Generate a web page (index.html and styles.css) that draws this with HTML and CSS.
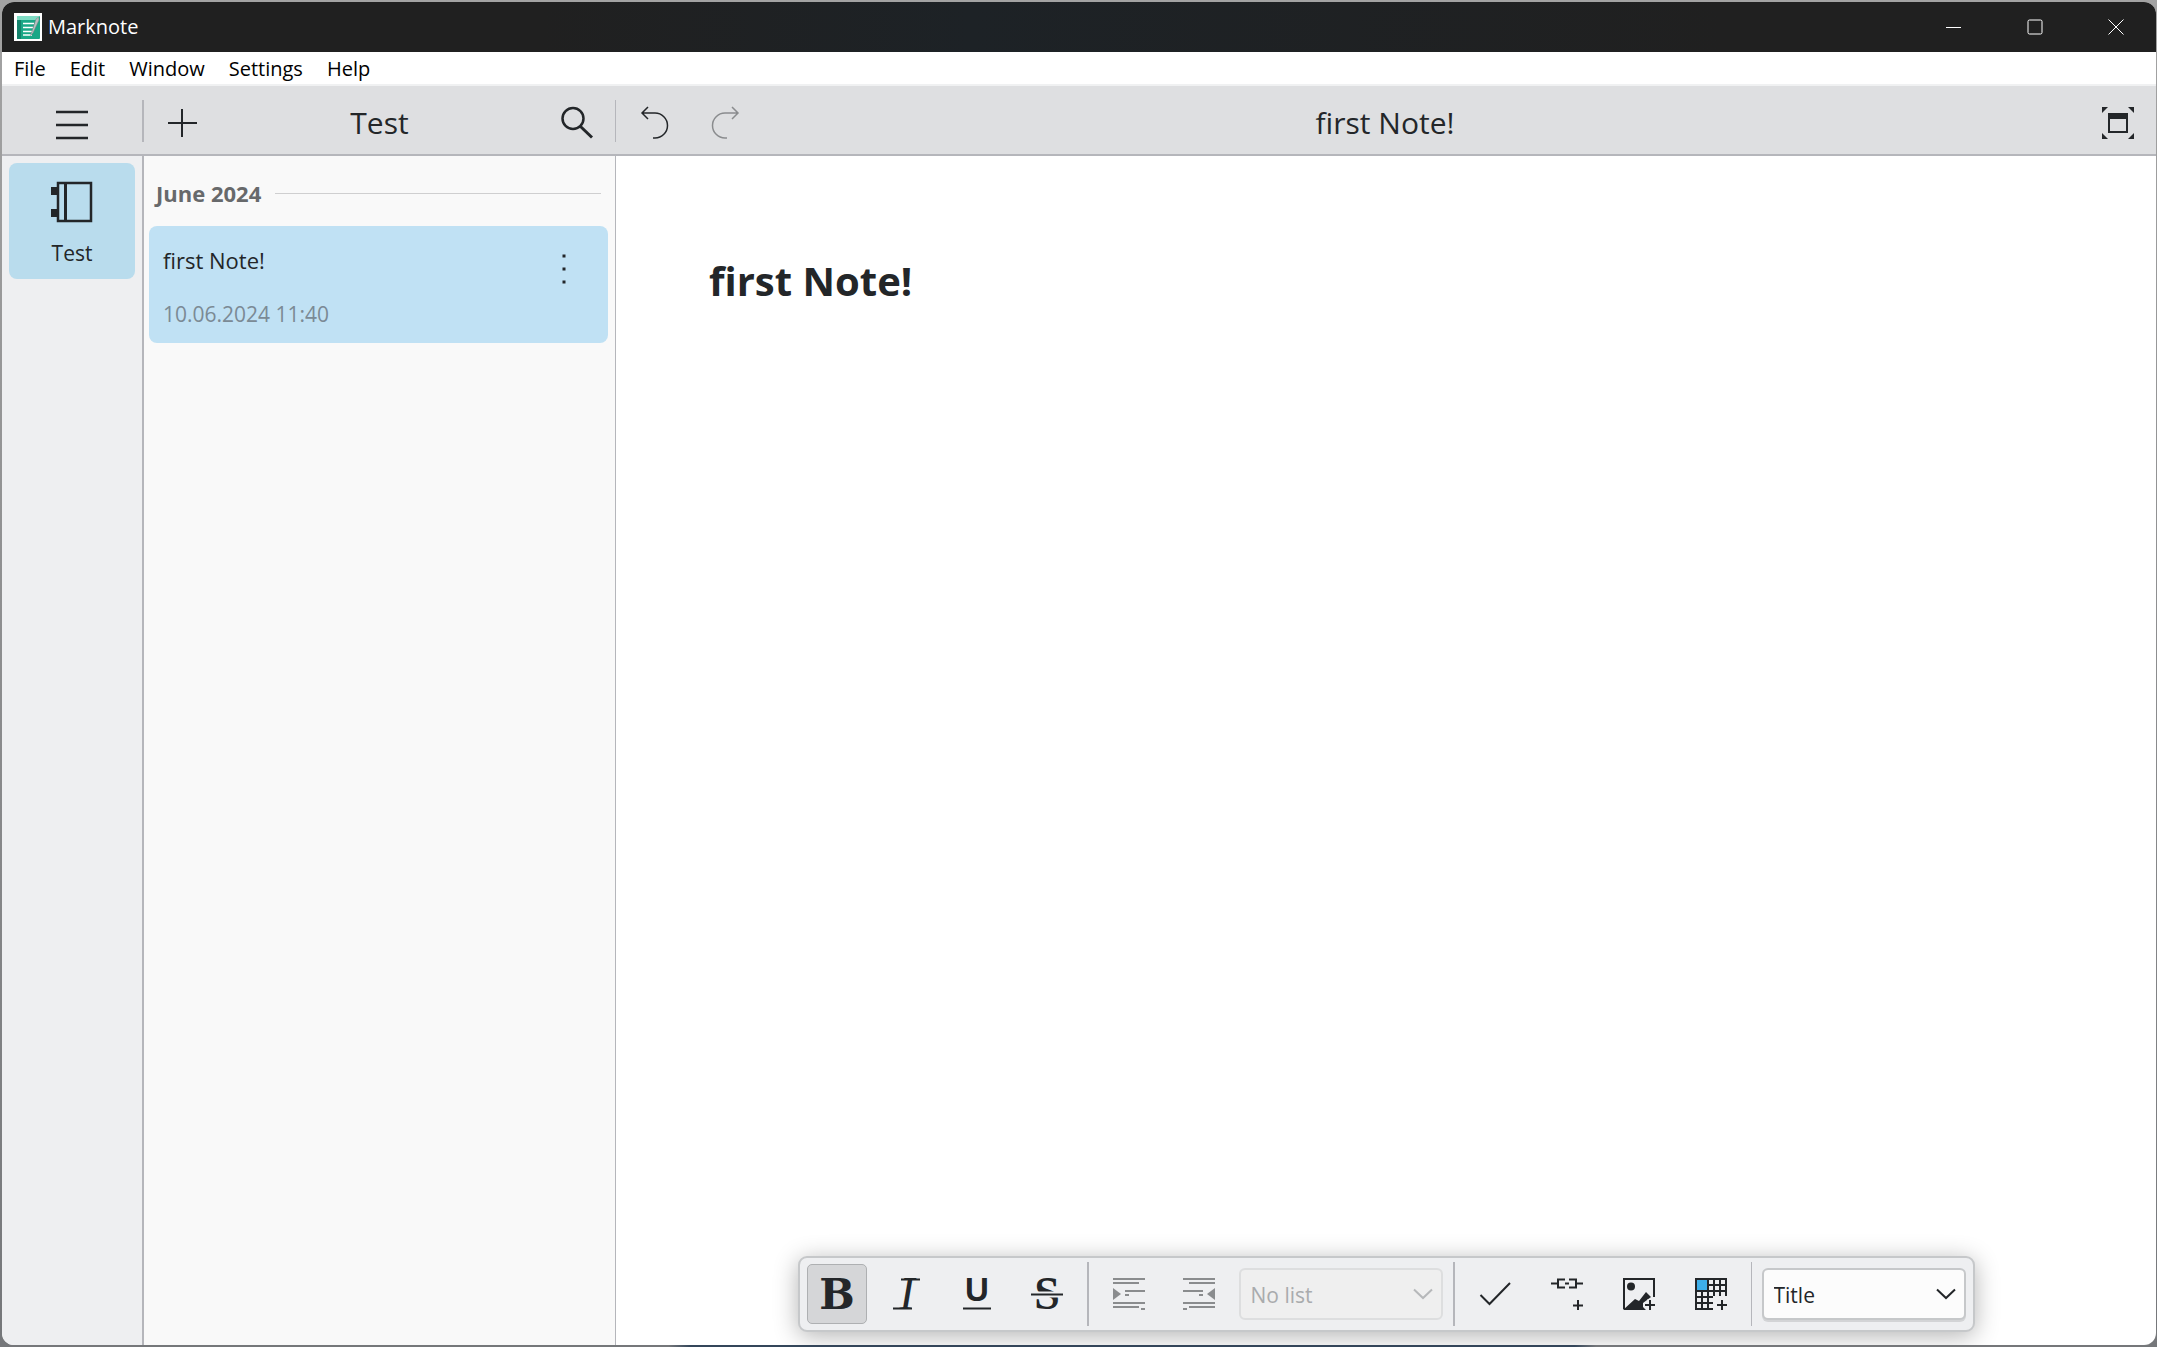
FILE: index.html
```html
<!DOCTYPE html>
<html lang="en">
<head>
<meta charset="utf-8">
<title>Marknote</title>
<link rel="stylesheet" href="styles.css">
</head>
<body>
<div class="window">
  <header class="titlebar">
    <svg class="app-icon" viewBox="0 0 28 28" aria-hidden="true">
      <rect width="28" height="28" fill="#fff"/>
      <rect x="3" y="3" width="23" height="23" rx="1" fill="#1aa786"/>
      <rect x="3" y="3" width="4" height="23" fill="#14826b"/>
      <path d="M3 3H25V7H3Z" fill="#7fdcc4"/>
      <path d="M9 10.500H20M9 14.500H19M9 18.500H18M9 22H18" stroke="#fff" stroke-width="1.500" fill="none"/>
      <path d="M24.500 4L22 6L17.500 19.500L16.500 22.500L19 20L25 7Z" fill="#b8bfc0" stroke="#75807f" stroke-width=".5"/>
    </svg>
    <span class="app-name">Marknote</span>
    <div class="window-buttons">
      <button type="button" aria-label="Minimize"><svg viewBox="0 0 16 16"><path d="M0 8.500H15"/></svg></button>
      <button type="button" aria-label="Maximize"><svg viewBox="0 0 16 16"><rect x="1" y="1" width="14" height="14" rx="1.500"/></svg></button>
      <button type="button" aria-label="Close"><svg viewBox="0 0 16 16"><path d="M.5 .5L15.500 15.500M15.500 .5L.5 15.500"/></svg></button>
    </div>
  </header>

  <nav class="menubar">
    <button type="button">File</button>
    <button type="button">Edit</button>
    <button type="button">Window</button>
    <button type="button">Settings</button>
    <button type="button">Help</button>
  </nav>

  <div class="columns toolbar">
    <div class="tool-cell tool-menu">
      <button type="button" class="tool" aria-label="Menu"><svg viewBox="0 0 32 32"><path d="M0 5H32M0 18H32M0 31H32" stroke-width="2.500"/></svg></button>
    </div>
    <div class="tool-cell tool-list">
      <button type="button" class="tool" aria-label="New note"><svg viewBox="0 0 32 32"><path d="M2 16H31M16 2V30" stroke-width="2"/></svg></button>
      <h2 class="bar-title">Test</h2>
      <button type="button" class="tool" aria-label="Search"><svg viewBox="0 0 32 32"><circle cx="12" cy="11.500" r="10.500" stroke-width="2.500"/><path d="M19 19L31 30.500" stroke-width="3"/></svg></button>
    </div>
    <div class="tool-cell tool-note">
      <button type="button" class="tool" aria-label="Undo"><svg viewBox="0 0 32 32"><path d="M10 0L4 6L10 12M4 6H17A12.500 12.500 0 0 1 17 31H15" stroke-width="1.500"/></svg></button>
      <button type="button" class="tool" aria-label="Redo" disabled><svg viewBox="0 0 32 32"><path d="M22 0L28 6L22 12M28 6H15A12.500 12.500 0 0 0 15 31H17" stroke-width="1.500"/></svg></button>
      <h2 class="bar-title">first Note!</h2>
      <button type="button" class="tool" aria-label="Full screen"><svg viewBox="0 0 32 32"><g fill="#232629" stroke="none"><path d="M0 0H6L0 6Z"/><path d="M32 0H26L32 6Z"/><path d="M0 32H6L0 26Z"/><path d="M32 32H26L32 26Z"/><path d="M6 6H26V26H6ZM8 12V24H24V12Z" fill-rule="evenodd"/></g></svg></button>
    </div>
  </div>

  <div class="columns content">
    <aside class="notebooks">
      <a href="#test" class="notebook">
        <svg viewBox="0 0 42 42" aria-hidden="true"><path d="M7 2H40V40H7Z" fill="none" stroke="#232629" stroke-width="2.500"/><path d="M14.500 2V40" stroke="#232629" stroke-width="3"/><path d="M0 6H7V14H0ZM0 28H7V36H0Z" fill="#232629"/></svg>
        <span>Test</span>
      </a>
    </aside>

    <section class="notes">
      <h3 class="month">June 2024</h3>
      <article class="note">
        <div class="note-text">
          <a href="#first-note" class="note-name">first Note!</a>
          <time class="note-date" datetime="2024-06-10T11:40">10.06.2024 11:40</time>
        </div>
        <button type="button" class="note-more" aria-label="More actions"><svg viewBox="0 0 32 32"><path d="M14.500 1.500h3v3h-3zM14.500 14.500h3v3h-3zM14.500 27.500h3v3h-3z" fill="#232629" stroke="none"/></svg></button>
      </article>
    </section>

    <main class="editor">
      <h1 class="note-title">first Note!</h1>
      <div class="format-bar">
        <button type="button" class="format active" aria-label="Bold"><svg viewBox="0 0 32 32"><text x="16" y="31" class="letter heavy">B</text></svg></button>
        <button type="button" class="format" aria-label="Italic"><svg viewBox="0 0 32 32"><text x="16" y="31" class="letter slanted">I</text><path d="M10 1.500H29M2 30.500H21" stroke-width="2"/></svg></button>
        <button type="button" class="format" aria-label="Underline"><svg viewBox="0 0 32 32"><text x="16" y="23" class="letter plain">U</text><path d="M2 30.500H30" stroke-width="2"/></svg></button>
        <button type="button" class="format" aria-label="Strikethrough"><svg viewBox="0 0 32 32"><text x="16" y="31" class="letter">S</text><path d="M0 16.500H32" stroke="#eeeff1" stroke-width="6"/><path d="M0 16.500H32" stroke-width="2"/></svg></button>
        <span class="rule"></span>
        <button type="button" class="format" aria-label="Increase indent" disabled><svg viewBox="0 0 32 32"><path d="M0 1H32M0 5H26M12 13H32M12 17H16M0 25H32M0 29H26M28 31H32" stroke-width="2"/><path d="M0 10L8 16L0 22Z" fill="#8a8c8e" stroke="none"/></svg></button>
        <button type="button" class="format" aria-label="Decrease indent" disabled><svg viewBox="0 0 32 32"><path d="M0 1H32M6 5H32M0 13H20M16 17H20M0 25H32M6 29H32M0 31H4" stroke-width="2"/><path d="M32 10L24 16L32 22Z" fill="#8a8c8e" stroke="none"/></svg></button>
        <div class="combo combo-disabled">
          <select aria-label="List style" disabled><option>No list</option></select>
          <svg viewBox="0 0 18 10" aria-hidden="true"><path d="M0 .5L9 9L18 .5"/></svg>
        </div>
        <span class="rule"></span>
        <div class="inserts">
          <button type="button" class="format" aria-label="Checkbox"><svg viewBox="0 0 32 32"><path d="M1.500 17L10.500 26L31 5" stroke-width="2"/></svg></button>
          <button type="button" class="format" aria-label="Insert link"><svg viewBox="0 0 32 32"><path d="M0 5.500H6M14 1.500H7V9.500H14M14 5.500H18M18 1.500H25V9.500H18M26 5.500H32M27 22V32M22 27.500H32" stroke-width="2"/></svg></button>
          <button type="button" class="format" aria-label="Insert image"><svg viewBox="0 0 32 32"><path d="M1 31V1H31V19" stroke-width="2"/><path d="M0 32L12 21L16 23L23 14L28 19L20 25V29L23 32Z" fill="#232629" stroke="none"/><circle cx="8" cy="8.500" r="4" fill="#232629" stroke="none"/><path d="M27 21V32M21 27H32" stroke="#eeeff1" stroke-width="5"/><path d="M27 22V32M22 27H32" stroke-width="2"/></svg></button>
          <button type="button" class="format" aria-label="Insert table"><svg viewBox="0 0 32 32"><rect x="1" y="1" width="12" height="12" fill="#3daee9" stroke="none"/><path d="M18 31H1V1H31V18M1 13H31M1 19H18M1 25H18M7 13V31M13 1V31M19 1V18M25 1V18M13 7H31" stroke-width="2"/><path d="M27 22V32M22 27H32" stroke-width="2"/></svg></button>
        </div>
        <span class="rule rule-thin"></span>
        <div class="combo">
          <select aria-label="Heading level"><option>Title</option></select>
          <svg viewBox="0 0 18 10" aria-hidden="true"><path d="M0 .5L9 9L18 .5"/></svg>
        </div>
      </div>
    </main>
  </div>
</div>
</body>
</html>
```
FILE: styles.css
```css
* { box-sizing: border-box; }

body {
  margin: 0;
  min-height: 100vh;
  padding: 2px 1px 2px 2px;
  display: flex;
  background:
    linear-gradient(90deg, transparent 31%, #34465a 32%, #34465a 73%, transparent 74%) bottom / 100% 2px no-repeat,
    linear-gradient(#a3a3a3, #75777a);
  color: #232629;
  font-family: "Open Sans", "Noto Sans", sans-serif;
  font-size: 21px;
  line-height: 28px;
}

button, select { font: inherit; color: inherit; }
button { border: 0; padding: 0; background: none; }
a { color: inherit; text-decoration: none; }
h1, h2, h3 { margin: 0; }

svg { display: block; fill: none; stroke: none; }
button svg, .combo svg { stroke: #232629; }
button:disabled svg { stroke: #8a8c8e; }

.window {
  flex: 1;
  display: flex;
  flex-direction: column;
  border-radius: 12px;
  overflow: hidden;
  background: #fff;
}

/* Title bar */
.titlebar {
  height: 50px;
  display: flex;
  align-items: center;
  gap: 6px;
  padding-left: 12px;
  background: linear-gradient(90deg, #202020 25%, #1d2226 45%, #202020 80%);
  color: #fff;
  font-size: 20px;
}
.app-icon { width: 28px; height: 28px; }
.window-buttons { display: flex; align-self: stretch; margin-left: auto; }
.window-buttons button { width: 81px; display: grid; place-items: center; }
.window-buttons svg { width: 16px; height: 16px; stroke: #fff; }

/* Menu bar */
.menubar {
  display: flex;
  height: 34px;
  border-bottom: 2px solid #f0f1f2;
  background: #fff;
  color: #000;
  font-size: 20px;
}
.menubar button { padding: 2px 12px 0; }

/* Columns shared by the toolbar and the content */
.columns { display: grid; grid-template-columns: 142px 472px 1fr; }

.toolbar {
  height: 70px;
  background: #dedfe1;
  border-bottom: 2px solid #b5b6bb;
}
.tool-cell { display: flex; align-items: center; margin: 14px 0 12px; padding: 4px 22px 0; }
.tool-menu { justify-content: center; border-right: 2px solid #b5b6bb; }
.tool-list { border-right: 1px solid #b5b6bb; }
.tool-note { gap: 40px; }
.tool svg { width: 32px; height: 32px; overflow: visible; }
.bar-title {
  flex: 1;
  text-align: center;
  font-size: 30px;
  font-weight: 400;
  line-height: 38px;
}
.tool-note .bar-title { padding-right: 74px; }

.content { flex: 1; }

/* Notebooks */
.notebooks {
  padding: 7px;
  background: #eeeff1;
  border-right: 2px solid #b5b6bb;
}
.notebook {
  display: flex;
  flex-direction: column;
  align-items: center;
  gap: 16px;
  height: 116px;
  padding-top: 18px;
  border-radius: 8px;
  background: #b9dced;
}
.notebook svg { width: 42px; height: 42px; }

/* Note list */
.notes {
  padding: 22px 7px 0 5px;
  background: #f9f9f9;
  border-right: 1px solid #b5b6bb;
}
.month {
  display: flex;
  align-items: center;
  gap: 14px;
  height: 30px;
  margin: 0 7px 18px;
  color: #67696b;
  font-size: 22px;
}
.month::after { content: ""; flex: 1; height: 1px; background: #cfcfd0; }
.note {
  display: flex;
  justify-content: space-between;
  height: 117px;
  padding: 20px 28px 0 14px;
  border-radius: 8px;
  background: #c0e1f4;
}
.note-text { display: flex; flex-direction: column; gap: 26px; }
.note-name { font-size: 22px; }
.note-date { color: #7b8a95; }
.note-more { align-self: flex-start; padding-top: 7px; }
.note-more svg { width: 32px; height: 32px; }

/* Editor */
.editor {
  display: flex;
  flex-direction: column;
  justify-content: space-between;
  padding: 97px 0 13px;
}
.note-title { padding-left: 93px; font-size: 40px; line-height: 56px; }

/* Formatting bar */
.format-bar {
  align-self: center;
  display: flex;
  align-items: center;
  gap: 10px;
  height: 76px;
  padding: 0 7px;
  border: 2px solid #c6c8ca;
  border-radius: 9px;
  background: #eeeff1;
  box-shadow: 0 4px 24px rgba(0, 0, 0, .3);
}
.format {
  width: 60px;
  height: 60px;
  display: grid;
  place-items: center;
  border: 1px solid transparent;
  border-radius: 5px;
}
.format.active { background: #d5d6d8; border-color: #aeb0b2; }
.format svg { width: 32px; height: 32px; overflow: visible; }
.letter {
  fill: #232629;
  stroke: none;
  font: bold 46px "Liberation Serif", serif;
  text-anchor: middle;
}
.letter.heavy { font: bold 42px "DejaVu Serif", serif; }
.letter.slanted { font-style: italic; font-weight: 400; }
.letter.plain { font: bold 33px "Liberation Sans", sans-serif; }
.rule { width: 2px; height: 64px; background: #b5b6bb; }
.rule-thin { width: 1px; }
.inserts { display: flex; gap: 12px; }

.combo { display: grid; width: 204px; align-items: center; }
.combo select, .combo svg { grid-area: 1 / 1; }
.combo select {
  appearance: none;
  width: 100%;
  height: 52px;
  padding: 2px 10px 0;
  border: 2px solid #c6c8ca;
  border-radius: 6px;
  background: #fcfcfc;
  box-shadow: 0 2px 0 #d3d4d6;
}
.combo svg {
  justify-self: end;
  width: 18px;
  height: 10px;
  margin-right: 11px;
  stroke-width: 2;
  overflow: visible;
  pointer-events: none;
}
.combo-disabled select {
  border-color: #dddedf;
  background: #efefef;
  box-shadow: none;
  color: #a9abad;
  opacity: 1;
}
.combo-disabled svg { stroke: #b6b8ba; }
```
